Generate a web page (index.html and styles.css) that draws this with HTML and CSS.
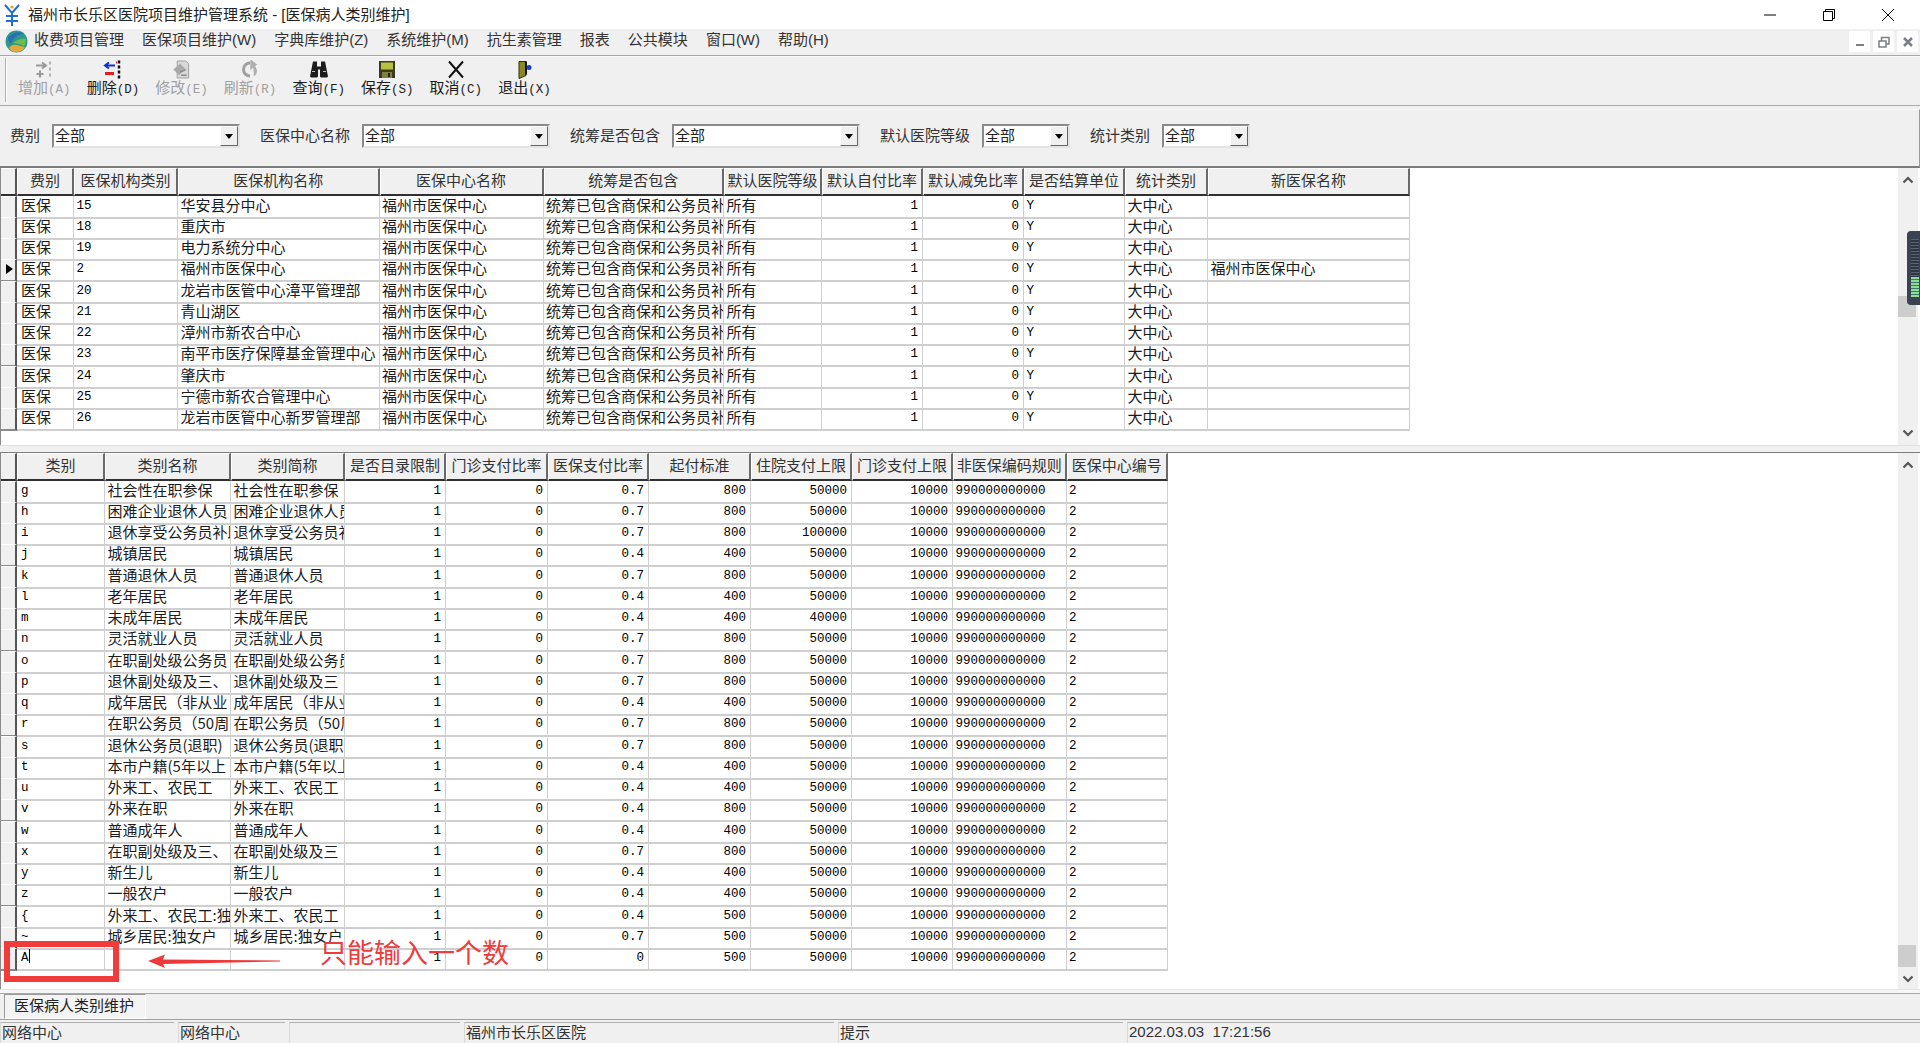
FILE: index.html
```html
<!DOCTYPE html>
<html lang="zh-CN">
<head>
<meta charset="utf-8">
<title>福州市长乐区医院项目维护管理系统</title>
<link rel="stylesheet" href="styles.css">
</head>
<body>
<header class="titlebar">
  <svg class="app-icon" width="18" height="24" viewBox="0 0 18 24"><path d="M2 2l7 8 7-8M9 10v13M3 13h12M3 18h12" fill="none" stroke="#1f6fd0" stroke-width="2"/><circle cx="9" cy="4" r="1.6" fill="#e8a020"/></svg>
  <span class="title-text">福州市长乐区医院项目维护管理系统 - [医保病人类别维护]</span>
  <div class="win-controls">
    <svg width="14" height="14" viewBox="0 0 14 14"><path d="M1 7h12" stroke="#000" stroke-width="1"/></svg>
    <svg width="14" height="14" viewBox="0 0 14 14"><path d="M1.5 3.5h9v9h-9zM3.5 3.5v-2h9v9h-2" fill="none" stroke="#000"/></svg>
    <svg width="14" height="14" viewBox="0 0 14 14"><path d="M1 1l12 12M13 1L1 13" stroke="#000"/></svg>
  </div>
</header>

<nav class="menubar">
  <svg class="logo" width="23" height="23" viewBox="0 0 23 23"><circle cx="11.5" cy="11.5" r="11" fill="#2f9a8c"/><path d="M4 18C8 12 14 16 20 17 17 23 7 24 4 18z" fill="#e8a838"/><path d="M3 7C8 2 15 1 19 4 13 4 8 8 6 14 4 13 3 10 3 7z" fill="#2a6fb8"/><path d="M8 13c4-3 8-5 13-4 0 3-1 6-2 7-4-2-7-3-11-3z" fill="#6cc04a"/></svg>
  <span>收费项目管理</span><span>医保项目维护(W)</span><span>字典库维护(Z)</span><span>系统维护(M)</span><span>抗生素管理</span><span>报表</span><span>公共模块</span><span>窗口(W)</span><span>帮助(H)</span>
  <div class="mdi-controls">
    <b><svg width="10" height="10" viewBox="0 0 10 10"><path d="M1 8h8" stroke="#7a8088" stroke-width="2"/></svg></b>
    <b><svg width="12" height="12" viewBox="0 0 12 12"><path d="M1 5h7v6H1zM3.500 5V1.500h7.500V8H8" fill="none" stroke="#7a8088" stroke-width="1.500"/></svg></b>
    <b><svg width="12" height="12" viewBox="0 0 12 12"><path d="M2 2l8 8M10 2l-8 8" stroke="#7a8088" stroke-width="2.500"/></svg></b>
  </div>
</nav>

<div class="toolbar">
  <div class="grip"></div>
  <div class="tool off"><svg width="20" height="18" viewBox="0 0 20 18"><path d="M2 5h9M8 2l4 3-4 3M6 10v7M2.500 13.500h7" fill="none" stroke="#9a9a9a" stroke-width="2"/><path d="M16 1v3M16 7v3M16 13v3" stroke="#b0b0b0" stroke-width="2"/></svg><span>增加<em>(A)</em></span></div>
  <div class="tool"><svg width="20" height="18" viewBox="0 0 20 18"><path d="M12 5H3M6 2L2 5l4 3" fill="none" stroke="#1030d0" stroke-width="2"/><path d="M2 13h9" stroke="#e02020" stroke-width="3"/><path d="M16 0v3M16 5v3M16 10v3M16 15v3" stroke="#111" stroke-width="2.500"/><path d="M13 2h1" stroke="#e02020" stroke-width="2"/></svg><span>删除<em>(D)</em></span></div>
  <div class="tool off"><svg width="20" height="20" viewBox="0 0 20 20"><path d="M6 1h9l3 3v15H6z" fill="#d8d8d8" stroke="#a0a0a0"/><path d="M2 10l7-6 5 5-6 7z" fill="#a8a8a8"/><path d="M9 13l6-3M10 16h6" stroke="#8c8c8c" stroke-width="1.500"/></svg><span>修改<em>(E)</em></span></div>
  <div class="tool off"><svg width="20" height="18" viewBox="0 0 20 18"><path d="M10 2.500a6.500 6.500 0 1 0 0 13" fill="none" stroke="#a0a0a0" stroke-width="3"/><path d="M11 0v8l5-4zM13 5a6 6 0 0 1 1 10" fill="#b0b0b0" stroke="#b0b0b0" stroke-width="1.500" fill-rule="evenodd"/></svg><span>刷新<em>(R)</em></span></div>
  <div class="tool"><svg width="20" height="18" viewBox="0 0 20 18"><path d="M4 1h4v5h4V1h4l3 15-1 1h-6l-1-1V9H9v7l-1 1H2l-1-1z" fill="#1c1c1c"/><path d="M3 11h3M14 11h3" stroke="#bbb"/></svg><span>查询<em>(F)</em></span></div>
  <div class="tool"><svg width="20" height="19" viewBox="0 0 20 19"><rect x="2" y="1" width="16" height="17" fill="#3a3a20"/><rect x="4" y="2.500" width="12" height="7" fill="#b8c040"/><rect x="5" y="12" width="10" height="6" fill="#808040"/><rect x="11" y="13" width="2" height="4" fill="#222"/></svg><span>保存<em>(S)</em></span></div>
  <div class="tool"><svg width="20" height="18" viewBox="0 0 20 18"><path d="M3 1l14 16M17 1L3 17" stroke="#111" stroke-width="2"/></svg><span>取消<em>(C)</em></span></div>
  <div class="tool"><svg width="20" height="18" viewBox="0 0 20 18"><path d="M5 1h7v14l-7 3z" fill="#8a8a20" stroke="#30300c"/><path d="M12 1v13" stroke="#111" stroke-width="2"/><circle cx="15" cy="7" r="2.500" fill="#1c3cd0"/></svg><span>退出<em>(X)</em></span></div>
</div>

<form class="filters">
  <label class="field">费别<span class="combo wa">全部<i class="drop"></i></span></label>
  <label class="field">医保中心名称<span class="combo wa">全部<i class="drop"></i></span></label>
  <label class="field">统筹是否包含<span class="combo wa">全部<i class="drop"></i></span></label>
  <label class="field">默认医院等级<span class="combo wb">全部<i class="drop"></i></span></label>
  <label class="field">统计类别<span class="combo wb">全部<i class="drop"></i></span></label>
</form>

<section class="grid-wrap upper">
  <div class="grid g1">
    <div class="row head"><i class="ind"></i><span>费别</span><span>医保机构类别</span><span>医保机构名称</span><span>医保中心名称</span><span>统筹是否包含</span><span>默认医院等级</span><span>默认自付比率</span><span>默认减免比率</span><span>是否结算单位</span><span>统计类别</span><span>新医保名称</span></div>
    <div class="row"><i class="ind"></i><span>医保</span><span class="m">15</span><span>华安县分中心</span><span>福州市医保中心</span><span>统筹已包含商保和公务员补充</span><span>所有</span><span class="m r">1</span><span class="m r">0</span><span class="m">Y</span><span>大中心</span><span></span></div>
    <div class="row"><i class="ind"></i><span>医保</span><span class="m">18</span><span>重庆市</span><span>福州市医保中心</span><span>统筹已包含商保和公务员补充</span><span>所有</span><span class="m r">1</span><span class="m r">0</span><span class="m">Y</span><span>大中心</span><span></span></div>
    <div class="row"><i class="ind"></i><span>医保</span><span class="m">19</span><span>电力系统分中心</span><span>福州市医保中心</span><span>统筹已包含商保和公务员补充</span><span>所有</span><span class="m r">1</span><span class="m r">0</span><span class="m">Y</span><span>大中心</span><span></span></div>
    <div class="row"><i class="ind cur"></i><span>医保</span><span class="m">2</span><span>福州市医保中心</span><span>福州市医保中心</span><span>统筹已包含商保和公务员补充</span><span>所有</span><span class="m r">1</span><span class="m r">0</span><span class="m">Y</span><span>大中心</span><span>福州市医保中心</span></div>
    <div class="row"><i class="ind"></i><span>医保</span><span class="m">20</span><span>龙岩市医管中心漳平管理部</span><span>福州市医保中心</span><span>统筹已包含商保和公务员补充</span><span>所有</span><span class="m r">1</span><span class="m r">0</span><span class="m">Y</span><span>大中心</span><span></span></div>
    <div class="row"><i class="ind"></i><span>医保</span><span class="m">21</span><span>青山湖区</span><span>福州市医保中心</span><span>统筹已包含商保和公务员补充</span><span>所有</span><span class="m r">1</span><span class="m r">0</span><span class="m">Y</span><span>大中心</span><span></span></div>
    <div class="row"><i class="ind"></i><span>医保</span><span class="m">22</span><span>漳州市新农合中心</span><span>福州市医保中心</span><span>统筹已包含商保和公务员补充</span><span>所有</span><span class="m r">1</span><span class="m r">0</span><span class="m">Y</span><span>大中心</span><span></span></div>
    <div class="row"><i class="ind"></i><span>医保</span><span class="m">23</span><span>南平市医疗保障基金管理中心</span><span>福州市医保中心</span><span>统筹已包含商保和公务员补充</span><span>所有</span><span class="m r">1</span><span class="m r">0</span><span class="m">Y</span><span>大中心</span><span></span></div>
    <div class="row"><i class="ind"></i><span>医保</span><span class="m">24</span><span>肇庆市</span><span>福州市医保中心</span><span>统筹已包含商保和公务员补充</span><span>所有</span><span class="m r">1</span><span class="m r">0</span><span class="m">Y</span><span>大中心</span><span></span></div>
    <div class="row"><i class="ind"></i><span>医保</span><span class="m">25</span><span>宁德市新农合管理中心</span><span>福州市医保中心</span><span>统筹已包含商保和公务员补充</span><span>所有</span><span class="m r">1</span><span class="m r">0</span><span class="m">Y</span><span>大中心</span><span></span></div>
    <div class="row"><i class="ind"></i><span>医保</span><span class="m">26</span><span>龙岩市医管中心新罗管理部</span><span>福州市医保中心</span><span>统筹已包含商保和公务员补充</span><span>所有</span><span class="m r">1</span><span class="m r">0</span><span class="m">Y</span><span>大中心</span><span></span></div>
  </div>
  <div class="scrollbar">
    <div class="sb-btn"><svg width="12" height="8" viewBox="0 0 12 8"><path d="M1.500 6.500L6 2l4.500 4.500" fill="none" stroke="#555" stroke-width="2.200"/></svg></div>
    <div class="thumb t-upper"></div>
    <div class="sb-fill"></div>
    <div class="sb-btn"><svg width="12" height="8" viewBox="0 0 12 8"><path d="M1.500 1.500L6 6l4.500-4.500" fill="none" stroke="#555" stroke-width="2.200"/></svg></div>
  </div>
</section>

<div class="divider"></div>

<section class="grid-wrap lower">
  <div class="grid g2">
    <div class="row head"><i class="ind"></i><span>类别</span><span>类别名称</span><span>类别简称</span><span>是否目录限制</span><span>门诊支付比率</span><span>医保支付比率</span><span>起付标准</span><span>住院支付上限</span><span>门诊支付上限</span><span>非医保编码规则</span><span>医保中心编号</span></div>
    <div class="row"><i class="ind"></i><span class="m">g</span><span>社会性在职参保</span><span>社会性在职参保</span><span class="m r">1</span><span class="m r">0</span><span class="m r">0.7</span><span class="m r">800</span><span class="m r">50000</span><span class="m r">10000</span><span class="m">990000000000</span><span class="m">2</span></div>
    <div class="row"><i class="ind"></i><span class="m">h</span><span>困难企业退休人员</span><span>困难企业退休人员</span><span class="m r">1</span><span class="m r">0</span><span class="m r">0.7</span><span class="m r">800</span><span class="m r">50000</span><span class="m r">10000</span><span class="m">990000000000</span><span class="m">2</span></div>
    <div class="row"><i class="ind"></i><span class="m">i</span><span>退休享受公务员补助</span><span>退休享受公务员补助</span><span class="m r">1</span><span class="m r">0</span><span class="m r">0.7</span><span class="m r">800</span><span class="m r">100000</span><span class="m r">10000</span><span class="m">990000000000</span><span class="m">2</span></div>
    <div class="row"><i class="ind"></i><span class="m">j</span><span>城镇居民</span><span>城镇居民</span><span class="m r">1</span><span class="m r">0</span><span class="m r">0.4</span><span class="m r">400</span><span class="m r">50000</span><span class="m r">10000</span><span class="m">990000000000</span><span class="m">2</span></div>
    <div class="row"><i class="ind"></i><span class="m">k</span><span>普通退休人员</span><span>普通退休人员</span><span class="m r">1</span><span class="m r">0</span><span class="m r">0.7</span><span class="m r">800</span><span class="m r">50000</span><span class="m r">10000</span><span class="m">990000000000</span><span class="m">2</span></div>
    <div class="row"><i class="ind"></i><span class="m">l</span><span>老年居民</span><span>老年居民</span><span class="m r">1</span><span class="m r">0</span><span class="m r">0.4</span><span class="m r">400</span><span class="m r">50000</span><span class="m r">10000</span><span class="m">990000000000</span><span class="m">2</span></div>
    <div class="row"><i class="ind"></i><span class="m">m</span><span>未成年居民</span><span>未成年居民</span><span class="m r">1</span><span class="m r">0</span><span class="m r">0.4</span><span class="m r">400</span><span class="m r">40000</span><span class="m r">10000</span><span class="m">990000000000</span><span class="m">2</span></div>
    <div class="row"><i class="ind"></i><span class="m">n</span><span>灵活就业人员</span><span>灵活就业人员</span><span class="m r">1</span><span class="m r">0</span><span class="m r">0.7</span><span class="m r">800</span><span class="m r">50000</span><span class="m r">10000</span><span class="m">990000000000</span><span class="m">2</span></div>
    <div class="row"><i class="ind"></i><span class="m">o</span><span>在职副处级公务员</span><span>在职副处级公务员</span><span class="m r">1</span><span class="m r">0</span><span class="m r">0.7</span><span class="m r">800</span><span class="m r">50000</span><span class="m r">10000</span><span class="m">990000000000</span><span class="m">2</span></div>
    <div class="row"><i class="ind"></i><span class="m">p</span><span>退休副处级及三、</span><span>退休副处级及三</span><span class="m r">1</span><span class="m r">0</span><span class="m r">0.7</span><span class="m r">800</span><span class="m r">50000</span><span class="m r">10000</span><span class="m">990000000000</span><span class="m">2</span></div>
    <div class="row"><i class="ind"></i><span class="m">q</span><span>成年居民（非从业</span><span>成年居民（非从业</span><span class="m r">1</span><span class="m r">0</span><span class="m r">0.4</span><span class="m r">400</span><span class="m r">50000</span><span class="m r">10000</span><span class="m">990000000000</span><span class="m">2</span></div>
    <div class="row"><i class="ind"></i><span class="m">r</span><span>在职公务员（50周岁</span><span>在职公务员（50周岁</span><span class="m r">1</span><span class="m r">0</span><span class="m r">0.7</span><span class="m r">800</span><span class="m r">50000</span><span class="m r">10000</span><span class="m">990000000000</span><span class="m">2</span></div>
    <div class="row"><i class="ind"></i><span class="m">s</span><span>退休公务员(退职)</span><span>退休公务员(退职)</span><span class="m r">1</span><span class="m r">0</span><span class="m r">0.7</span><span class="m r">800</span><span class="m r">50000</span><span class="m r">10000</span><span class="m">990000000000</span><span class="m">2</span></div>
    <div class="row"><i class="ind"></i><span class="m">t</span><span>本市户籍(5年以上</span><span>本市户籍(5年以上</span><span class="m r">1</span><span class="m r">0</span><span class="m r">0.4</span><span class="m r">400</span><span class="m r">50000</span><span class="m r">10000</span><span class="m">990000000000</span><span class="m">2</span></div>
    <div class="row"><i class="ind"></i><span class="m">u</span><span>外来工、农民工</span><span>外来工、农民工</span><span class="m r">1</span><span class="m r">0</span><span class="m r">0.4</span><span class="m r">400</span><span class="m r">50000</span><span class="m r">10000</span><span class="m">990000000000</span><span class="m">2</span></div>
    <div class="row"><i class="ind"></i><span class="m">v</span><span>外来在职</span><span>外来在职</span><span class="m r">1</span><span class="m r">0</span><span class="m r">0.4</span><span class="m r">800</span><span class="m r">50000</span><span class="m r">10000</span><span class="m">990000000000</span><span class="m">2</span></div>
    <div class="row"><i class="ind"></i><span class="m">w</span><span>普通成年人</span><span>普通成年人</span><span class="m r">1</span><span class="m r">0</span><span class="m r">0.4</span><span class="m r">400</span><span class="m r">50000</span><span class="m r">10000</span><span class="m">990000000000</span><span class="m">2</span></div>
    <div class="row"><i class="ind"></i><span class="m">x</span><span>在职副处级及三、</span><span>在职副处级及三</span><span class="m r">1</span><span class="m r">0</span><span class="m r">0.7</span><span class="m r">800</span><span class="m r">50000</span><span class="m r">10000</span><span class="m">990000000000</span><span class="m">2</span></div>
    <div class="row"><i class="ind"></i><span class="m">y</span><span>新生儿</span><span>新生儿</span><span class="m r">1</span><span class="m r">0</span><span class="m r">0.4</span><span class="m r">400</span><span class="m r">50000</span><span class="m r">10000</span><span class="m">990000000000</span><span class="m">2</span></div>
    <div class="row"><i class="ind"></i><span class="m">z</span><span>一般农户</span><span>一般农户</span><span class="m r">1</span><span class="m r">0</span><span class="m r">0.4</span><span class="m r">400</span><span class="m r">50000</span><span class="m r">10000</span><span class="m">990000000000</span><span class="m">2</span></div>
    <div class="row"><i class="ind"></i><span class="m">{</span><span>外来工、农民工:独</span><span>外来工、农民工</span><span class="m r">1</span><span class="m r">0</span><span class="m r">0.4</span><span class="m r">500</span><span class="m r">50000</span><span class="m r">10000</span><span class="m">990000000000</span><span class="m">2</span></div>
    <div class="row"><i class="ind"></i><span class="m">~</span><span>城乡居民:独女户</span><span>城乡居民:独女户</span><span class="m r">1</span><span class="m r">0</span><span class="m r">0.7</span><span class="m r">500</span><span class="m r">50000</span><span class="m r">10000</span><span class="m">990000000000</span><span class="m">2</span></div>
    <div class="row"><i class="ind star">*</i><span class="m caret">A</span><span></span><span></span><span class="m r">1</span><span class="m r">0</span><span class="m r">0</span><span class="m r">500</span><span class="m r">50000</span><span class="m r">10000</span><span class="m">990000000000</span><span class="m">2</span></div>
  </div>
  <div class="scrollbar">
    <div class="sb-btn"><svg width="12" height="8" viewBox="0 0 12 8"><path d="M1.500 6.500L6 2l4.500 4.500" fill="none" stroke="#555" stroke-width="2.200"/></svg></div>
    <div class="thumb t-lower"></div>
    <div class="sb-fill"></div>
    <div class="sb-btn"><svg width="12" height="8" viewBox="0 0 12 8"><path d="M1.500 1.500L6 6l4.500-4.500" fill="none" stroke="#555" stroke-width="2.200"/></svg></div>
  </div>
</section>

<div class="tabstrip"><div class="tab">医保病人类别维护</div></div>

<footer class="statusbar">
  <div class="s1">网络中心</div>
  <div class="s2">网络中心</div>
  <div class="s3"></div>
  <div class="s4">福州市长乐区医院</div>
  <div class="s5">提示</div>
  <div class="s6">2022.03.03&nbsp;&nbsp;17:21:56</div>
</footer>

<div class="meter"><i class="meter-dark"></i><i class="meter-green"></i></div>
<div class="mark-box"></div>
<svg class="mark-arrow" width="132" height="16" viewBox="0 0 132 16"><path d="M0 8L17 1.500 15 6.500 132 7.500V8.500L15 11 17 15z" fill="#ec3a3a"/></svg>
<div class="mark-text">只能输入一个数</div>
</body>
</html>
```

FILE: styles.css
```css
* { box-sizing: border-box; }
html, body { margin: 0; padding: 0; }
body {
  position: relative;
  width: 1920px;
  height: 1043px;
  overflow: hidden;
  display: flex;
  flex-direction: column;
  background: #f0f0f0;
  color: #1c1c1c;
  font: 15px/21px "Liberation Sans", "Noto Sans CJK SC", sans-serif;
}

/* title bar */
.titlebar {
  flex: 0 0 29px;
  display: flex;
  align-items: center;
  background: #fff;
  padding-left: 3px;
}
.app-icon { margin-right: 7px; }
.title-text { font-size: 15px; color: #222; }
.win-controls {
  margin-left: auto;
  display: flex;
  gap: 45px;
  padding-right: 25px;
}

/* menu */
.menubar {
  flex: 0 0 26px;
  display: flex;
  align-items: center;
  gap: 18px;
  padding-left: 5px;
  padding-bottom: 5px;
  border-bottom: 1px solid #a8a8a8;
  color: #333;
}
.logo { margin-right: -12px; margin-bottom: -4px; flex: none; }
.mdi-controls {
  margin-left: auto;
  display: flex;
  gap: 3px;
  padding-right: 2px;
  margin-bottom: -4px;
}
.mdi-controls b {
  width: 21px;
  height: 21px;
  background: #fff;
  display: flex;
  align-items: center;
  justify-content: center;
}

/* toolbar */
.toolbar {
  flex: 0 0 50px;
  display: flex;
  padding-left: 10px;
  border-top: 1px solid #fafafa;
  border-bottom: 1px solid #ababab;
  font: 15px/16px "Noto Sans CJK SC", sans-serif;
}
.grip {
  width: 2px;
  height: 44px;
  margin: 1px 3px 0 -5px;
  border-left: 1px solid #b0b0b0;
  border-right: 1px solid #fff;
}
.tool {
  width: 68.6px;
  display: flex;
  flex-direction: column;
  align-items: center;
  padding-top: 3px;
  height: 48px;
}
.tool svg { height: 19px; flex: none; }
.tool span { margin-top: 0; white-space: nowrap; }
.tool em { font: 12.5px/16px "Liberation Mono", monospace; }
.tool.off { color: #a0a0a0; }

/* filters */
.filters {
  flex: 0 0 59px;
  margin: 3px 0 0;
  display: flex;
  align-items: center;
  gap: 20px;
  padding: 0 0 5px 10px;
  border-top: 1px solid #fafafa;
  border-right: 1px solid #9a9a9a;
  border-bottom: 2px solid #7c7c7c;
  font-family: "Noto Sans CJK SC", sans-serif;
}
.field { display: flex; align-items: flex-start; gap: 12px; color: #333; }
.combo {
  position: relative;
  display: block;
  height: 24px;
  background: #fff;
  border: 2px solid;
  border-color: #8a8a8a #e4e4e4 #e4e4e4 #8a8a8a;
  padding-left: 1px;
  line-height: 17px;
  color: #222;
}
.wa { width: 188px; }
.wb { width: 88px; }
.drop {
  position: absolute;
  right: 0;
  top: 0;
  width: 18px;
  height: 20px;
  background: #f0f0f0;
  border: 1px solid;
  border-color: #fff #666 #666 #fff;
}
.drop::after {
  content: "";
  position: absolute;
  left: 4px;
  top: 7px;
  border: 4px solid transparent;
  border-top: 5px solid #000;
  border-bottom: 0;
}

/* grids */
.grid-wrap {
  display: flex;
  background: #fff;
  border-left: 1px solid #8a8a8a;
  padding-right: 2px;
  overflow: hidden;
}
.upper { flex: 0 0 277px; }
.lower { flex: 0 0 537px; border-top: 1px solid #7c7c7c; }
.divider {
  flex: 0 0 7px;
  border-top: 1px solid #e2e2e2;
}
.grid {
  flex: 1;
  min-width: 0;
  font: 15px/18px "Noto Sans CJK SC", sans-serif;
}
.row { display: grid; height: 21.26px; }
.row.head { height: 27.5px; }
.g1 .row { grid-template-columns: 16px 57px 104px 201.5px 164px 180.5px 98px 101px 101px 101px 83px 202px; }
.g2 .row { grid-template-columns: 16px 88px 126px 114px 101px 102px 101px 102px 101px 101px 113.5px 101.5px; }
.row span {
  overflow-x: clip;
  overflow-y: visible;
  white-space: nowrap;
  padding-left: 2.5px;
  border-right: 1px solid #cfcfcf;
  border-bottom: 2px solid #cfcfcf;
  color: #1c1c1c;
}
.row .ind + span { padding-left: 4px; }
.row .m { font: 12.5px/21px "Liberation Mono", monospace; color: #000; }
.row .r { text-align: right; padding: 0 4px 0 0; }
.row.head span {
  background: #f0f0f0;
  text-align: center;
  padding: 2px 0 0;
  border-top: 1px solid #fff;
  border-left: 1px solid #fff;
  border-right: 2px solid #6a6a6a;
  border-bottom: 2px solid #303030;
  color: #333;
}
.ind {
  display: block;
  position: relative;
  background: #f0f0f0;
  border-top: 1px solid #fff;
  border-right: 2px solid #555;
  border-bottom: 2px solid #8a8a8a;
}
.row.head .ind { border-bottom: 2px solid #303030; }
.cur::after {
  content: "";
  position: absolute;
  left: 5px;
  top: 4px;
  border: 5.500px solid transparent;
  border-left: 7px solid #000;
  border-right: 0;
}
.star {
  font: 12px/20px "Liberation Mono", monospace;
  text-align: center;
  color: #444;
}
.caret::after {
  content: "";
  display: inline-block;
  width: 1px;
  height: 14px;
  vertical-align: -2px;
  background: #000;
}

/* scrollbars */
.scrollbar {
  flex: 0 0 20px;
  display: flex;
  flex-direction: column;
  background: #f0f0f0;
}
.sb-btn {
  flex: 0 0 24px;
  display: flex;
  align-items: center;
  justify-content: center;
}
.sb-fill { flex: 1; }
.thumb { height: 21px; width: 18px; background: #cdcdcd; flex: none; }
.t-upper { margin-top: 104px; }
.t-lower { margin-top: 468px; height: 22px; }

/* tabs and status */
.tabstrip {
  flex: 0 0 31px;
  border-top: 1px solid #e4e4e4;
  padding: 4px 0 0 4px;
  display: flex;
  background: linear-gradient(#f6f6f6 3px, #a8a8a8 3px, #a8a8a8 4px, #f0f0f0 4px);
  border-bottom: 1px solid #a0a0a0;
}
.tab {
  width: 142px;
  height: 25px;
  padding: 0 0 0 9px;
  background: #f4f4f4;
  border: 1px solid;
  border-color: #9a9a9a #fff #fff #9a9a9a;
  font: 15px/19px "Noto Sans CJK SC", sans-serif;
  color: #222;
}
.statusbar {
  flex: 0 0 24px;
  display: flex;
  gap: 4px;
  padding-top: 2px;
  font: 15px/17px "Noto Sans CJK SC", sans-serif;
  color: #333;
}
.statusbar div {
  border-top: 1px solid #b0b0b0;
  border-left: 1px solid #d8d8d8;
  padding-left: 1px;
  white-space: nowrap;
}
.s1 { width: 174px; }
.s2 { width: 107px; }
.s3 { width: 171px; }
.s4 { width: 370px; }
.s5 { width: 285px; }
.s6 { flex: 1; font-family: "Liberation Sans", sans-serif; }

/* things lying over the window */
.meter {
  position: absolute;
  right: 0;
  top: 231px;
  width: 13px;
  height: 74px;
  background: #3b4352;
  border-radius: 4px 0 0 4px;
  padding: 8px 1px 8px 4px;
  display: flex;
  flex-direction: column;
}
.meter-dark {
  flex: 1;
  background: repeating-linear-gradient(#5a6272 0 1px, #2f3644 1px 3px);
}
.meter-green {
  flex: 0 0 20px;
  background: repeating-linear-gradient(#8edb9a 0 2px, #3a7a68 2px 3px);
}
.mark-box {
  position: absolute;
  left: 4px;
  top: 941px;
  width: 115px;
  height: 41px;
  border: 6px solid #f23c3c;
}
.mark-arrow {
  position: absolute;
  left: 148px;
  top: 953px;
}
.mark-text {
  position: absolute;
  left: 320px;
  top: 933px;
  font: 27px/38px "Noto Sans CJK SC", sans-serif;
  color: #ee3c3c;
  white-space: nowrap;
}
```
